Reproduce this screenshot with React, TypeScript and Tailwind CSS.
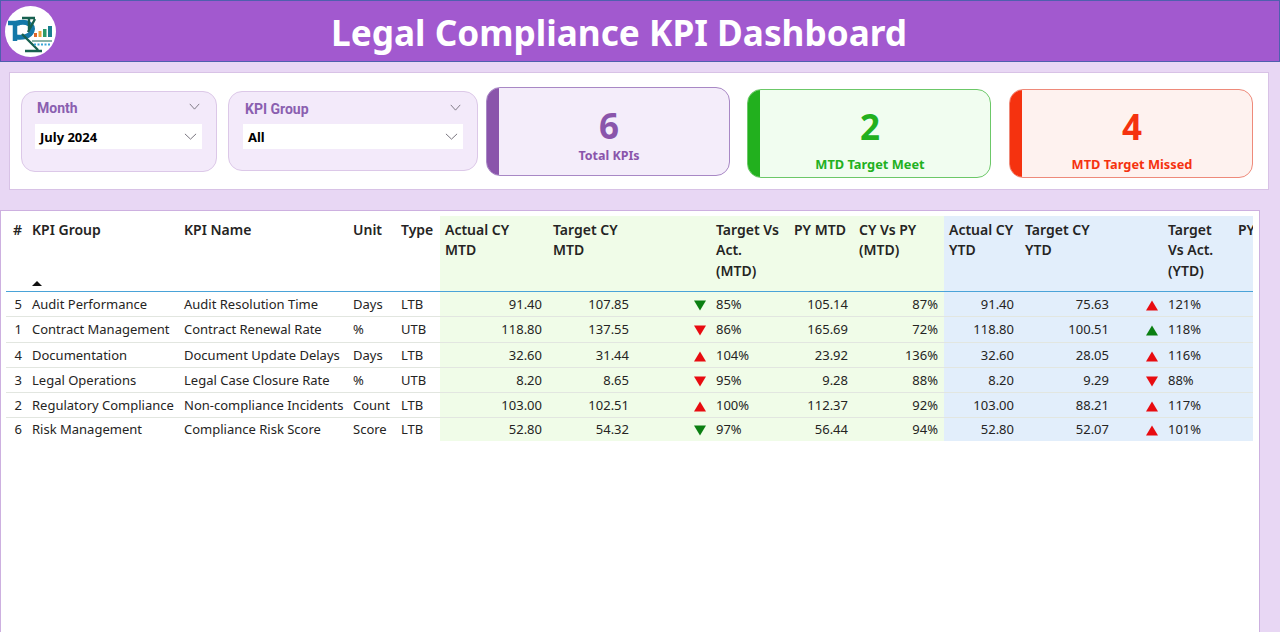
import React from "react";

type Dir = "ug" | "ur" | "dg" | "dr";
type Row = [string, string, string, string, string, string, string, Dir, string, string, string, string, string, Dir, string];

const rows: Row[] = [
  ["5", "Audit Performance", "Audit Resolution Time", "Days", "LTB", "91.40", "107.85", "dg", "85%", "105.14", "87%", "91.40", "75.63", "ur", "121%"],
  ["1", "Contract Management", "Contract Renewal Rate", "%", "UTB", "118.80", "137.55", "dr", "86%", "165.69", "72%", "118.80", "100.51", "ug", "118%"],
  ["4", "Documentation", "Document Update Delays", "Days", "LTB", "32.60", "31.44", "ur", "104%", "23.92", "136%", "32.60", "28.05", "ur", "116%"],
  ["3", "Legal Operations", "Legal Case Closure Rate", "%", "UTB", "8.20", "8.65", "dr", "95%", "9.28", "88%", "8.20", "9.29", "dr", "88%"],
  ["2", "Regulatory Compliance", "Non-compliance Incidents", "Count", "LTB", "103.00", "102.51", "ur", "100%", "112.37", "92%", "103.00", "88.21", "ur", "117%"],
  ["6", "Risk Management", "Compliance Risk Score", "Score", "LTB", "52.80", "54.32", "dg", "97%", "56.44", "94%", "52.80", "52.07", "ur", "101%"],
];

const widths = [22, 152, 169, 48, 43, 108, 86, 77, 79, 64, 90, 76, 95, 48, 70, 20];
const rowHeights = ["h-[25px]", "h-[26px]", "h-[25px]", "h-[25px]", "h-[25px]", "h-[24px]"];

function Arrow({ d }: { d: Dir }) {
  const fill = d[1] === "g" ? "#0b7f12" : "#e80b10";
  return (
    <svg width="12" height="11" viewBox="0 0 12 11" className="inline-block align-middle">
      <polygon points={d[0] === "u" ? "6,0.5 12,10.5 0,10.5" : "0,0.5 12,0.5 6,10.5"} fill={fill} />
    </svg>
  );
}

function Chevron({ className, w }: { className: string; w: number }) {
  return (
    <svg width={w} height="7" viewBox="0 0 14 8" preserveAspectRatio="none" className={className} fill="none" stroke="#6a6570" strokeWidth="1">
      <polyline points="1,1 7,7 13,1" />
    </svg>
  );
}

function Slicer({ label, value, cls, lift }: { label: string; value: string; cls: string; lift: string }) {
  return (
    <div className={`${cls} mt-[18px] shrink-0 rounded-[14px] border border-[#dcc8e8] bg-[#f3eafa] pr-[14px] pt-[7px]`}>
      <div className={`${lift} flex h-[18px] items-center justify-between pl-[2px] pr-[2px]`}>
        <span className="font-['Roboto',sans-serif] text-[14px] font-bold leading-[18px] text-[#8a5fb0]">{label}</span>
        <Chevron w={11} className="mb-[3px]" />
      </div>
      <div className="mt-[7px] flex h-[25px] items-center justify-between bg-white pl-[5px] pr-[5px]">
        <span className="pt-[2px] text-[13px] font-bold leading-[23px] text-black">{value}</span>
        <Chevron w={13} className="" />
      </div>
    </div>
  );
}

type CardProps = { n: string; label: string; mt: string; mr: string; text: string; bar: string; bg: string; border: string; numTop: string; labelCls: string };

function Card({ n, label, mt, mr, text, bar, bg, border, numTop, labelCls }: CardProps) {
  return (
    <div className={`${mt} ${mr} ${bg} ${border} flex h-[89px] w-[244px] shrink-0 overflow-hidden rounded-[14px] border`}>
      <div className={`w-[12px] shrink-0 ${bar}`} />
      <div className="flex flex-1 flex-col items-center pr-[10px]">
        <div className={`${numTop} text-[35px] font-bold leading-[44px] ${text}`}>{n}</div>
        <div className={`${labelCls} font-bold leading-[16px] ${text}`}>{label}</div>
      </div>
    </div>
  );
}

function Logo() {
  return (
    <svg width="51" height="51" viewBox="0 0 51 51" className="ml-[4px] mt-[1px] shrink-0">
      <circle cx="25.5" cy="25.5" r="25.5" fill="#fff" />
      <path d="M3 17 H15 M10 17 V35" stroke="#1478a8" strokeWidth="4.5" fill="none" />
      <path d="M11 17.5 C22 14 29 19 27 25 C25 31 17 32 11 31" stroke="#1478a8" strokeWidth="5" fill="none" />
      <path d="M17 12 H30 M24 12 V24 M30 13 L23 26 M17 28 L33 44 M20 45 H37" stroke="#17604f" strokeWidth="2.4" fill="none" />
      <rect x="29" y="27" width="3" height="4" fill="#e0662a" />
      <rect x="33.5" y="25" width="3" height="6" fill="#e9a43a" />
      <rect x="38" y="23" width="3.5" height="8" fill="#2b9a68" />
      <rect x="43" y="20" width="4" height="11" fill="#1a7f8f" />
      <rect x="27" y="34" width="20" height="2" fill="#8ab3a8" />
      <path d="M29 38.5 H46" stroke="#3aa6d8" strokeWidth="2" strokeDasharray="2 1.5" />
    </svg>
  );
}

const hCell = "align-top border-b border-[#4aa3d8] pl-[4px] pr-[2px] pt-[4px] text-[14px] font-semibold leading-[20.4px] text-[#252423]";
const green = "bg-[#f0fce8]";
const blue = "bg-[#e2eefb]";

const headers: [string, string, string][] = [
  ["#", "", "pl-[7px]"],
  ["KPI Group", "", ""],
  ["KPI Name", "", ""],
  ["Unit", "", ""],
  ["Type", "", ""],
  ["Actual CY MTD", green, "pl-[5px] pr-[30px]"],
  ["Target CY MTD", green, "pl-[5px] pr-[10px]"],
  ["", green, ""],
  ["Target Vs Act. (MTD)", green, "pl-[5px] pr-[10px]"],
  ["PY MTD", green, "whitespace-nowrap"],
  ["CY Vs PY (MTD)", green, "pl-[5px]"],
  ["Actual CY YTD", blue, "pl-[5px]"],
  ["Target CY YTD", blue, "pl-[5px] pr-[10px]"],
  ["", blue, ""],
  ["Target Vs Act. (YTD)", blue, "pl-[5px] pr-[6px]"],
  ["PY MTD", blue, "pl-[5px] whitespace-nowrap overflow-hidden"],
];

export default function App() {
  return (
    <div className="h-[632px] w-[1280px] overflow-hidden bg-[#e8d7f4] font-['Noto_Sans',sans-serif] text-[#252423]">
      <header className="flex h-[62px] items-center border border-[#4f5fae] bg-[#a259cf]">
        <Logo />
        <h1 className="ml-[275px] mt-[2px] whitespace-nowrap text-[35.2px] font-bold leading-[44px] text-white">Legal Compliance KPI Dashboard</h1>
      </header>

      <section className="ml-[9px] mt-[10px] flex h-[118px] w-[1260px] items-start border border-[#d8c2e6] bg-white pl-[11px]">
        <Slicer label="Month" value="July 2024" cls="h-[81px] w-[196px] pl-[13px]" lift="" />
        <div className="w-[11px] shrink-0" />
        <Slicer label="KPI Group" value="All" cls="h-[80px] w-[250px] pl-[14px]" lift="translate-y-[1px]" />
        <div className="w-[8px] shrink-0" />
        <Card n="6" label="Total KPIs" mt="mt-[14px]" mr="mr-[17px]" text="text-[#8a55ab]" bar="bg-[#8a55ab]" bg="bg-[#f4edfa]" border="border-[#a888c5]" numTop="mt-[16px]" labelCls="text-[12.5px]" />
        <Card n="2" label="MTD Target Meet" mt="mt-[16px]" mr="mr-[18px]" text="text-[#22b01e]" bar="bg-[#22b01e]" bg="bg-[#f1fdf0]" border="border-[#6cc868]" numTop="mt-[15px]" labelCls="mt-[7px] text-[12.8px]" />
        <Card n="4" label="MTD Target Missed" mt="mt-[16px]" mr="" text="text-[#f5320f]" bar="bg-[#f5320f]" bg="bg-[#fef2ef]" border="border-[#ee8a7a]" numTop="mt-[15px]" labelCls="mt-[7px] text-[12.8px]" />
      </section>

      <section className="mt-[20px] h-[430px] w-[1260px] border border-[#cdb0e0] bg-white pl-[5px] pt-[5px]">
        <div className="w-[1247px] overflow-hidden">
          <table className="w-[1247px] table-fixed border-collapse">
            <colgroup>
              {widths.map((w, i) => (
                <col key={i} style={{ width: w }} />
              ))}
            </colgroup>
            <thead>
              <tr className="h-[75px]">
                {headers.map(([t, bg, extra], i) => (
                  <th key={i} className={`${hCell} relative text-left ${bg} ${extra}`}>
                    {t}
                    {i === 1 && (
                      <svg width="10" height="5" viewBox="0 0 10 5" className="absolute bottom-[5px] left-[4px]">
                        <polygon points="5,0 10,5 0,5" fill="#111" />
                      </svg>
                    )}
                  </th>
                ))}
              </tr>
            </thead>
            <tbody className="text-[13px] leading-[18px]">
              {rows.map((r, ri) => {
                const line = ri === rows.length - 1 ? "" : "border-b border-[#e2e6e0]";
                return (
                  <tr key={ri} className={`${rowHeights[ri]} ${line}`}>
                    <td className="pr-[6px] text-right">{r[0]}</td>
                    <td className="whitespace-nowrap pl-[4px]">{r[1]}</td>
                    <td className="whitespace-nowrap pl-[4px]">{r[2]}</td>
                    <td className="pl-[4px]">{r[3]}</td>
                    <td className="pl-[4px]">{r[4]}</td>
                    <td className={`${green} pr-[6px] text-right`}>{r[5]}</td>
                    <td className={`${green} pr-[5px] text-right`}>{r[6]}</td>
                    <td className={`${green} pr-[5px] text-right`}><Arrow d={r[7]} /></td>
                    <td className={`${green} pl-[5px]`}>{r[8]}</td>
                    <td className={`${green} pr-[6px] text-right`}>{r[9]}</td>
                    <td className={`${green} pr-[6px] text-right`}>{r[10]}</td>
                    <td className={`${blue} pr-[6px] text-right`}>{r[11]}</td>
                    <td className={`${blue} pr-[6px] text-right`}>{r[12]}</td>
                    <td className={`${blue} pr-[5px] text-right`}><Arrow d={r[13]} /></td>
                    <td className={`${blue} pl-[5px]`}>{r[14]}</td>
                    <td className={blue} />
                  </tr>
                );
              })}
            </tbody>
          </table>
        </div>
      </section>
    </div>
  );
}
